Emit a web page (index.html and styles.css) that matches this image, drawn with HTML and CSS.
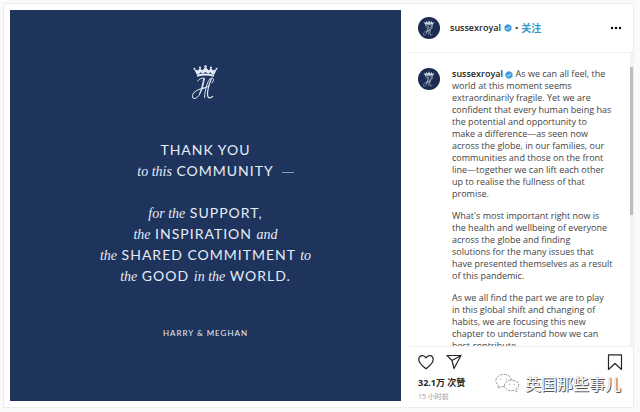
FILE: index.html
```html
<!DOCTYPE html>
<html lang="en">
<head>
    <meta charset="UTF-8">
    <meta name="viewport" content="width=device-width, initial-scale=1.0">
    <title>sussexroyal</title>
    <link rel="stylesheet" href="styles.css">
</head>
<body>
    <!-- shared shapes -->
    <svg class="defs" aria-hidden="true">
        <symbol id="monogram" viewBox="0 0 28 36">
            <g fill="currentColor">
                <path d="M5 10.500 Q14 8 23 10.500 L22.500 12.500 Q14 10 5.500 12.500Z"/>
                <path d="M5 10.500 L2.200 4.500 L6 6 L8.500 3.500 L10.500 6 L14 2.500 L17.500 6 L19.500 3.500 L22 6 L25.800 4.500 L23 10.500 L20.500 9.500 L19 8 L17 9.500 L14 7.500 L11 9.500 L9 8 L7.500 9.500Z"/>
                <circle cx="14" cy="2" r="1.300"/>
                <circle cx="8.300" cy="3" r="1.100"/>
                <circle cx="19.700" cy="3" r="1.100"/>
                <circle cx="2.500" cy="4.300" r="1"/>
                <circle cx="25.500" cy="4.300" r="1"/>
            </g>
            <g fill="none" stroke="currentColor" stroke-linecap="round">
                <path stroke-width="1" d="M6 17 Q8 13.500 13 14 C12 21 9 33 3.500 35 C0 36 -.5 32 2 29 C5 26 9 25 13.500 24"/>
                <path stroke-width="1" d="M12 15 C11 21 9.500 26 8 30"/>
                <path stroke-width="1" d="M20.500 19 C23 17 23 13.500 20 14 C16.500 15 13.500 25 13 34 M10 25 Q15 24 18 22"/>
                <path stroke-width="1.200" d="M20 15 C17 21 14 34 18 34.500 Q20 34.500 21.500 33"/>
            </g>
        </symbol>
        <symbol id="verified" viewBox="0 0 16 16">
            <path fill="#3f9ddd" d="M8 0l2 1.500 2.500-.2.800 2.400 2.100 1.400L14.700 8l.7 2.800-2.100 1.400-.8 2.400-2.500-.2L8 16l-2-1.600-2.500.2-.8-2.400L.6 10.800 1.300 8 .6 5.100l2.100-1.400.8-2.400 2.500.2z"/>
            <path fill="none" stroke="#fff" stroke-width="1.800" d="M4.500 8.200l2.500 2.500 4.500-5"/>
        </symbol>
    </svg>

    <article class="post">
        <div class="media">
            <div class="poster">
                <svg class="crest" role="img" aria-label="Monogram"><use href="#monogram"/></svg>
                <p class="message">
                    THANK YOU<br>
                    <i>to this</i> COMMUNITY<span class="dash"></span>
                </p>
                <p class="message">
                    <i>for the</i> SUPPORT,<br>
                    <i>the</i> INSPIRATION <i>and</i><br>
                    <i>the</i> SHARED COMMITMENT <i>to</i><br>
                    <i>the</i> GOOD <i>in the</i> WORLD.
                </p>
                <p class="signed">HARRY &amp; MEGHAN</p>
            </div>
        </div>

        <div class="side">
            <header class="top">
                <span class="avatar"><svg><use href="#monogram"/></svg></span>
                <a class="user" href="#">sussexroyal</a>
                <svg class="badge"><use href="#verified"/></svg>
                <span class="dot">•</span>
                <button class="follow">关注</button>
                <button class="more" aria-label="More options">
                    <svg viewBox="0 0 12 4"><circle cx="2" cy="2" r="1.200"/><circle cx="6" cy="2" r="1.200"/><circle cx="10" cy="2" r="1.200"/></svg>
                </button>
            </header>

            <div class="comments">
                <div class="comment">
                    <span class="avatar"><svg><use href="#monogram"/></svg></span>
                    <div class="caption">
                        <p><a class="user" href="#">sussexroyal</a> <svg class="badge"><use href="#verified"/></svg> As we can all feel, the<br>
                        world at this moment seems<br>
                        extraordinarily fragile. Yet we are<br>
                        confident that every human being has<br>
                        the potential and opportunity to<br>
                        make a difference—as seen now<br>
                        across the globe, in our families, our<br>
                        communities and those on the front<br>
                        line—together we can lift each other<br>
                        up to realise the fullness of that<br>
                        promise.</p>
                        <p>What's most important right now is<br>
                        the health and wellbeing of everyone<br>
                        across the globe and finding<br>
                        solutions for the many issues that<br>
                        have presented themselves as a result<br>
                        of this pandemic.</p>
                        <p>As we all find the part we are to play<br>
                        in this global shift and changing of<br>
                        habits, we are focusing this new<br>
                        chapter to understand how we can<br>
                        best contribute.</p>
                    </div>
                </div>
                <div class="track"><div class="thumb"></div></div>
            </div>

            <footer class="actions">
                <div class="icons">
                    <button aria-label="Like"><svg viewBox="0 0 16 16"><path d="M8 14.800C5.500 12.500.8 9.500.8 5.400.8 1.200 6 .2 8 3.900 10 .2 15.200 1.200 15.200 5.400 15.200 9.500 10.500 12.500 8 14.800Z"/></svg></button>
                    <button aria-label="Share"><svg viewBox="0 0 16 16"><path d="M1 1.500H15L8 14.500 6 6.500ZM6 6.500L15 1.500"/></svg></button>
                    <button class="save" aria-label="Save"><svg viewBox="0 0 16 16"><path d="M1.500.8H14.500V15.500L8 9.500 1.500 15.500Z"/></svg></button>
                </div>
                <a class="likes" href="#">32.1万 次赞</a>
                <time class="age">15 小时前</time>
            </footer>
        </div>

        <div class="watermark">
            <svg viewBox="0 0 26 20">
                <path d="M10 13.500L6 14 3 15.500 3.500 12.500C-2 8 2 1 9 1 14 1 17 4 17 7"/>
                <path d="M17 7C11 7 8 12 11 15.500 13.500 18.500 17 18.500 20 17.500L23 19 22.500 16C27 12.500 24 7 17 7Z"/>
                <path d="M6 5.500v1M12 5.500v1M15 11v1M20 11v1"/>
            </svg>
            <span>英国那些事儿</span>
        </div>
    </article>
</body>
</html>
```

FILE: styles.css
```css
* {
    box-sizing: border-box;
    margin: 0;
    padding: 0;
}

body {
    background-color: #fafafa;
    color: #262626;
    font-family: "Open Sans", "Noto Sans CJK SC", sans-serif;
    font-size: 9px;
    line-height: 12px;
    padding: 3px 6px 0 3px;
}

a {
    color: inherit;
    text-decoration: none;
}

button {
    background: none;
    border: none;
    font: inherit;
    cursor: pointer;
}

svg {
    display: block;
}

.defs {
    position: absolute;
    width: 0;
    height: 0;
}

.post {
    position: relative;
    display: grid;
    grid-template-columns: 1fr 224px;
    gap: 8px;
    background-color: #fff;
    border: 1px solid #ededed;
}

.media {
    padding: 6px 0 6px 6px;
}

/* the blue card */
.poster {
    display: flex;
    flex-direction: column;
    align-items: center;
    aspect-ratio: 1;
    padding-top: 54px;
    background-color: #1f345c;
    color: #e4edf7;
    font-family: Lato, sans-serif;
    text-align: center;
}

.crest {
    width: 27px;
    height: 36px;
    margin-bottom: 39px;
}

.message {
    font-size: 14px;
    line-height: 21px;
    letter-spacing: 1px;
    margin-bottom: 21px;
    white-space: nowrap;
}

.message i {
    font-family: "Liberation Serif", serif;
    line-height: 1;
    letter-spacing: 0;
}

/* hangs outside the centred line */
.dash {
    display: inline-block;
    width: 12px;
    height: 1px;
    margin: 0 -20px 0 8px;
    background-color: #8d9cb6;
    vertical-align: middle;
}

.signed {
    margin-top: 20px;
    font-size: 8px;
    letter-spacing: 1px;
}

/* right column, takes its height from the card */
.side {
    contain: size;
    display: flex;
    flex-direction: column;
}

.avatar {
    display: flex;
    align-items: center;
    justify-content: center;
    flex: none;
    width: 22px;
    height: 22px;
    border-radius: 50%;
    background-color: #1b2c50;
    color: #dbe4f0;
}

.avatar svg {
    width: 12px;
    height: 16px;
}

.user {
    font-weight: 600;
}

.badge {
    width: 8px;
    height: 8px;
}

.top {
    display: flex;
    align-items: center;
    height: 49px;
    padding: 0 6px 0 9px;
    border-bottom: 1px solid #efefef;
}

.top .user {
    margin: 0 0 0 10px;
}

.top .badge {
    margin-left: 3px;
}

.dot {
    margin: 0 3px;
}

.follow {
    color: #3897c8;
    font-size: 10px;
    font-weight: 700;
}

.more {
    margin-left: auto;
    padding-right: 5px;
}

.more svg {
    width: 12px;
    height: 4px;
}

.comments {
    display: flex;
    flex: 1;
    min-height: 0;
    overflow: hidden;
}

.comment {
    display: flex;
    flex: 1;
    gap: 12px;
    padding: 15px 0 0 9px;
}

.caption {
    color: #444;
    white-space: nowrap;
}

.caption p {
    margin-bottom: 10px;
}

.caption .user {
    color: #262626;
}

.caption .badge {
    display: inline-block;
    vertical-align: middle;
}

.track {
    width: 3px;
    padding-top: 14px;
    background-color: #f4f4f4;
}

.thumb {
    height: 53%;
    background-color: #bdbdbd;
}

.actions {
    display: flex;
    flex-direction: column;
    padding: 7px 10px 4px 9px;
    border-top: 1px solid #efefef;
}

.icons {
    display: flex;
    gap: 12px;
    margin-bottom: 7px;
}

.icons svg {
    width: 16px;
    height: 16px;
    fill: none;
    stroke: #262626;
    stroke-width: 1.2;
    stroke-linejoin: round;
}

.save {
    margin-left: auto;
}

.likes {
    font-weight: 700;
}

.age {
    color: #999;
    font-size: 7px;
    margin-top: 2px;
}

/* stamp over the lower right corner */
.watermark {
    position: absolute;
    right: 12px;
    bottom: 14px;
    display: flex;
    align-items: center;
    gap: 5px;
    color: #fff;
    font-family: "Noto Sans CJK SC", sans-serif;
    font-size: 16px;
    line-height: 20px;
    text-shadow: 1px 1px 0 #555, 0 0 1px #888;
}

.watermark svg {
    width: 25px;
    height: 20px;
    fill: none;
    stroke: #999;
    stroke-width: 1;
    stroke-dasharray: 3 1;
}
```
